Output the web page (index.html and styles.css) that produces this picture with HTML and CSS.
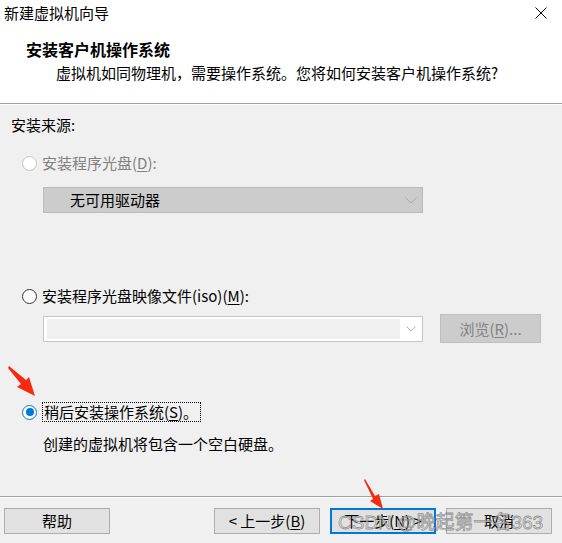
FILE: index.html
```html
<!DOCTYPE html>
<html lang="zh-CN">
<head>
<meta charset="utf-8">
<title>新建虚拟机向导</title>
<link rel="stylesheet" href="styles.css">
</head>
<body>
<div class="top">
  <div class="titlebar">
    <span class="title">新建虚拟机向导</span>
    <svg class="close" width="12" height="12" viewBox="0 0 12 12"><path d="M0.5 0.5L11.5 11.5M11.5 0.5L0.5 11.5" stroke="#000" stroke-width="1" fill="none"/></svg>
  </div>
  <div class="head-title">安装客户机操作系统</div>
  <div class="head-sub">虚拟机如同物理机，需要操作系统。您将如何安装客户机操作系统?</div>
</div>
<div class="main">
  <div class="source">安装来源:</div>
  <div class="radio-row disabled">
    <span class="radio radio-disabled"></span>
    <span class="label">安装程序光盘(<u>D</u>):</span>
  </div>
  <div class="dropdown">
    <span class="dd-text">无可用驱动器</span>
    <svg width="12" height="7" viewBox="0 0 12 7"><polyline points="0.5,0.5 6,6 11.5,0.5" fill="none" stroke="#a8a8a8" stroke-width="1"/></svg>
  </div>
  <div class="radio-row iso-row">
    <span class="radio"></span>
    <span class="label">安装程序光盘映像文件(iso)(<u>M</u>):</span>
  </div>
  <div class="combo-row">
    <div class="combo">
      <div class="combo-edit"></div>
      <svg width="10" height="6" viewBox="0 0 10 6"><polyline points="0.5,0.5 5,5 9.5,0.5" fill="none" stroke="#b4b4b4" stroke-width="1"/></svg>
    </div>
    <div class="browse">浏览(<u>R</u>)...</div>
  </div>
  <div class="radio-row later-row">
    <span class="radio radio-checked"><span class="dot"></span></span>
    <span class="label focus">稍后安装操作系统(<u>S</u>)。</span>
  </div>
  <div class="desc">创建的虚拟机将包含一个空白硬盘。</div>
</div>
<div class="footer">
  <div class="btn">帮助</div>
  <div class="btn-group">
    <div class="btn">&lt; 上一步(<u>B</u>)</div>
    <div class="btn btn-default">下一步(<u>N</u>) &gt;</div>
    <div class="btn">取消</div>
  </div>
</div>
<div class="watermark">CSDN @晚起第一名363</div>
<svg class="arrow arrow-1" width="40" height="40" viewBox="0 0 40 40"><polygon points="9,6 26,20 29,17 35,36 17,27 21,24 8,8" fill="#f52a10"/></svg>
<svg class="arrow arrow-2" width="40" height="40" viewBox="0 0 40 40"><polygon points="4,8 14,25 18,23 22,38 9,30 12,28 3,9" fill="#f52a10"/></svg>
</body>
</html>
```
FILE: styles.css
```css
* { box-sizing: border-box; }
html, body { margin: 0; padding: 0; }
body {
  width: 562px;
  height: 543px;
  overflow: hidden;
  background: #f0f0f0;
  font-family: "Noto Sans CJK SC", "Microsoft YaHei", sans-serif;
  font-size: 15px;
  color: #000;
  display: flex;
  flex-direction: column;
  position: relative;
}
u { text-decoration: underline; text-underline-offset: 2px; }

.top {
  height: 104px;
  background: #fff;
  border-bottom: 1px solid #a0a0a0;
  flex: none;
}
.titlebar {
  height: 25px;
  display: flex;
  align-items: center;
  justify-content: space-between;
  padding: 0 15px 0 4px;
}
.title { line-height: 20px; font-size: 15px; }
.close { display: block; }
.head-title {
  margin-top: 14px;
  padding-left: 26px;
  font-size: 16px;
  font-weight: bold;
  line-height: 20px;
}
.head-sub {
  margin-top: 4px;
  padding-left: 56px;
  line-height: 20px;
}

.main {
  flex: 1;
  border-top: 1px solid #fff;
  display: flex;
  flex-direction: column;
  align-items: flex-start;
}
.source {
  margin-top: 10px;
  padding-left: 11px;
  line-height: 20px;
}
.radio-row {
  display: flex;
  align-items: center;
  gap: 5px;
  padding-left: 22px;
  height: 20px;
  line-height: 20px;
}
.radio-row.disabled { margin-top: 18px; color: #808080; }
.iso-row { margin-top: 73px; }
.later-row { margin-top: 59px; }
.radio {
  width: 15px;
  height: 15px;
  border-radius: 50%;
  border: 1px solid #333;
  background: #fff;
  flex: none;
  display: flex;
  align-items: center;
  justify-content: center;
}
.radio-disabled { border-color: #c4c4c4; }
.radio-checked { border: 1.5px solid #0078d7; }
.dot { width: 8px; height: 8px; border-radius: 50%; background: #0078d7; }
.label.focus {
  border: 1px dotted #000;
  line-height: 18px;
  height: 20px;
  padding: 0 2px 0 1px;
}

.dropdown {
  margin-top: 14px;
  margin-left: 43px;
  width: 380px;
  height: 26px;
  background: #cccccc;
  border: 1px solid #bcbcbc;
  display: flex;
  align-items: center;
  justify-content: space-between;
  padding: 0 5px 0 26px;
}
.dd-text { line-height: 20px; }
.dropdown svg { display: block; }

.combo-row {
  margin-top: 8px;
  margin-left: 43px;
  display: flex;
  align-items: center;
  gap: 17px;
  height: 29px;
}
.combo {
  width: 380px;
  height: 26px;
  background: #fff;
  border: 1px solid #c6c6c6;
  display: flex;
  align-items: center;
  justify-content: space-between;
  padding: 0 6px 0 3px;
}
.combo-edit {
  width: 353px;
  height: 20px;
  background: #f0f0f0;
}
.combo svg { display: block; }
.browse {
  width: 101px;
  height: 29px;
  background: #cccccc;
  border: 1px solid #bfbfbf;
  color: #838383;
  display: flex;
  align-items: center;
  justify-content: center;
  line-height: 20px;
}

.desc {
  margin-top: 12px;
  padding-left: 43px;
  line-height: 20px;
}

.footer {
  flex: none;
  height: 47px;
  border-top: 1px solid #a0a0a0;
  box-shadow: inset 0 1px 0 #fff;
  padding: 11px 10px 9px 4px;
  display: flex;
  justify-content: space-between;
}
.btn-group { display: flex; gap: 10px; }
.btn {
  width: 106px;
  height: 26px;
  background: #e1e1e1;
  border: 1px solid #adadad;
  display: flex;
  align-items: center;
  justify-content: center;
  line-height: 20px;
}
.btn-default { border: 2px solid #0078d7; }

.watermark {
  position: absolute;
  left: 338px;
  top: 511px;
  font-family: "Liberation Sans", "Noto Sans CJK SC", sans-serif;
  font-size: 19px;
  line-height: 24px;
  color: rgba(235, 235, 235, 0.6);
  -webkit-text-stroke: 0.8px rgba(90, 90, 90, 0.6);
  white-space: nowrap;
  pointer-events: none;
}
.arrow { position: absolute; pointer-events: none; }
.arrow-1 { left: 0; top: 360px; }
.arrow-2 { left: 361px; top: 471px; }
```
